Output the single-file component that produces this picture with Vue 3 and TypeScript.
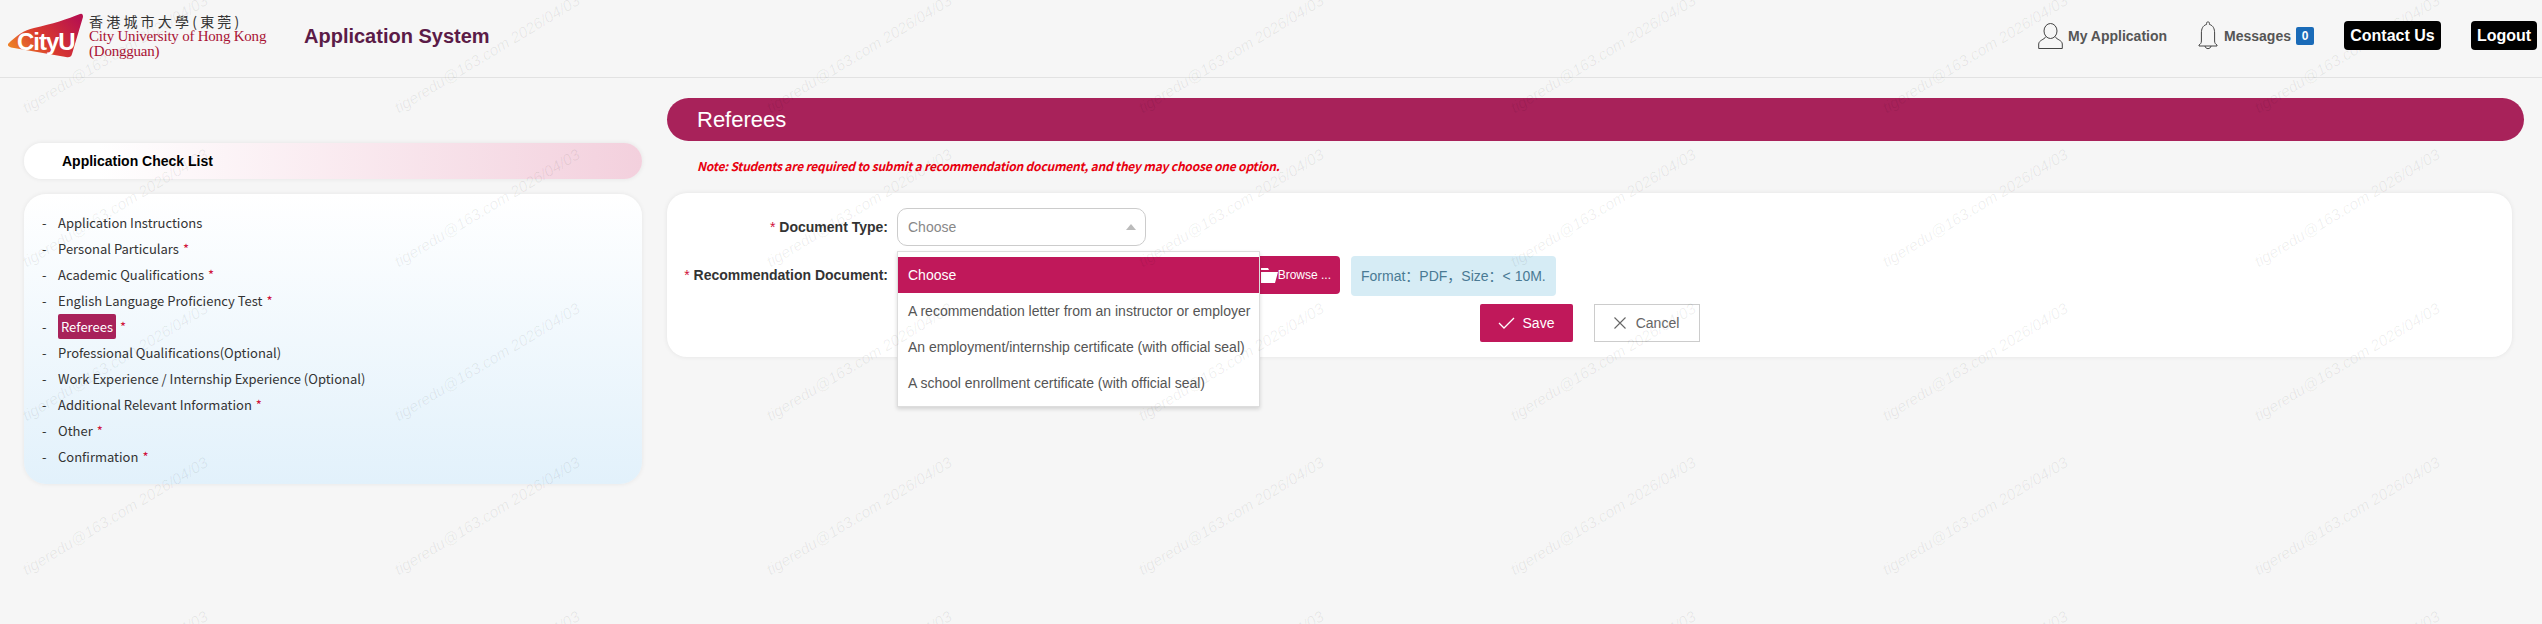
<template>
  <div class="page">
    <header class="header">
      <div class="brand">
        <svg class="logo" width="78" height="48" viewBox="0 0 78 48">
          <defs>
            <linearGradient id="logoGrad" x1="0" y1="0.75" x2="1" y2="0.25">
              <stop offset="0" stop-color="#ee8427" />
              <stop offset="0.45" stop-color="#d8382f" />
              <stop offset="1" stop-color="#b8124e" />
            </linearGradient>
          </defs>
          <path d="M0 31 C8 23 16 17 26 15 C44 11 60 6 72 1 Q75 0 75 4 L64 41 Q63 45 58 44 L6 35 Q-1 34 0 31 Z" fill="url(#logoGrad)" />
          <text x="9" y="37" class="logo-word">CityU</text>
        </svg>
        <div class="logo-names">
          <div class="name-cn">香港城市大學(東莞)</div>
          <div class="name-en">City University of Hong Kong</div>
          <div class="name-en">(Dongguan)</div>
        </div>
        <div class="app-title">Application System</div>
      </div>
      <nav class="top-nav">
        <a class="nav-item nav-app">
          <svg width="25" height="26" viewBox="0 0 25 26" fill="none" stroke="#444" stroke-width="1">
            <ellipse cx="12.5" cy="8" rx="6.5" ry="7.5" />
            <path d="M8 13.5 C6 17 1 17 .7 21 V25.5 H24.3 V21 C24 17 19 17 17 13.5" />
          </svg>
          <span>My Application</span>
        </a>
        <a class="nav-item nav-msg">
          <svg width="20" height="29" viewBox="0 0 20 29" fill="none" stroke="#444" stroke-width="1">
            <path d="M10 .8 C8.8 .8 8.4 2 8.6 3.4 C4.6 4.6 3.4 8 3.4 12 V20 C3.4 22 2.6 23 1 24 V25 H19 V24 C17.4 23 16.6 22 16.6 20 V12 C16.6 8 15.4 4.6 11.4 3.4 C11.6 2 11.2 .8 10 .8 Z" />
            <path d="M7 25 C7.5 28.5 12.5 28.5 13 25" />
          </svg>
          <span>Messages</span>
          <b class="badge">0</b>
        </a>
        <a class="black-btn contact">Contact Us</a>
        <a class="black-btn logout">Logout</a>
      </nav>
    </header>

    <div class="body">
      <aside class="side">
        <div class="check-head">Application Check List</div>
        <ul class="check-list">
          <li v-for="item in checks" :key="item.label">
            <span class="dash">-</span>
            <span :class="{ active: item.active }">{{ item.label }}</span>
            <i v-if="item.required" class="req">*</i>
          </li>
        </ul>
      </aside>

      <main class="main">
        <h1 class="title-bar">Referees</h1>
        <p class="note">Note: Students are required to submit a recommendation document, and they may choose one option.</p>

        <section class="card">
          <div class="row row-type">
            <label class="label"><i class="star">*</i> Document Type:</label>
            <div class="select-wrap">
              <div class="select">
                <span>Choose</span>
                <em class="caret"></em>
              </div>
              <ul class="dropdown">
                <li
                  v-for="(opt, i) in options"
                  :key="opt"
                  :class="{ selected: i === 0 }"
                >{{ opt }}</li>
              </ul>
            </div>
          </div>

          <div class="row row-doc">
            <label class="label"><i class="star">*</i> Recommendation Document:</label>
            <div class="browse">
              <svg width="17" height="15" viewBox="0 0 17 15" fill="#fff">
                <path d="M0 0 H7 L8 2 H0 Z" />
                <path d="M0 4 H17 L14 15 H0 Z" />
              </svg>
              <span>Browse ...</span>
            </div>
            <div class="hint">Format&#xFF1A;PDF&#xFF0C;Size&#xFF1A;&lt; 10M.</div>
          </div>

          <div class="actions">
            <button class="btn save" type="button">
              <svg width="17" height="12" viewBox="0 0 17 12" fill="none" stroke="#fff" stroke-width="1.3">
                <path d="M1 6 L6 11 L16 1" />
              </svg>
              Save
            </button>
            <button class="btn cancel" type="button">
              <svg width="12" height="12" viewBox="0 0 12 12" fill="none" stroke="#666" stroke-width="1.1">
                <path d="M.5 .5 L11.5 11.5 M11.5 .5 L.5 11.5" />
              </svg>
              Cancel
            </button>
          </div>
        </section>
      </main>
    </div>

    <div class="marks">
      <span
        v-for="m in marks"
        :key="m.key"
        class="mark"
        :style="{ left: m.x + 'px', top: m.y + 'px' }"
      >tigeredu@163.com 2026/04/03</span>
    </div>
  </div>
</template>

<script setup lang="ts">
type TCheck = {
  label: string
  required?: boolean
  active?: boolean
}

const checks: Array<TCheck> = [
  { label: 'Application Instructions' },
  { label: 'Personal Particulars', required: true },
  { label: 'Academic Qualifications', required: true },
  { label: 'English Language Proficiency Test', required: true },
  { label: 'Referees', required: true, active: true },
  { label: 'Professional Qualifications(Optional)' },
  { label: 'Work Experience / Internship Experience (Optional)' },
  { label: 'Additional Relevant Information', required: true },
  { label: 'Other', required: true },
  { label: 'Confirmation', required: true },
]

const options: Array<string> = [
  'Choose',
  'A recommendation letter from an instructor or employer',
  'An employment/internship certificate (with official seal)',
  'A school enrollment certificate (with official seal)',
]

// watermark tile: 372 x 154
const marks: Array<{ key: string; x: number; y: number }> = []
for (let row = 0; row < 6; row++) {
  for (let col = 0; col < 7; col++) {
    marks.push({ key: `${row}-${col}`, x: 28 + col * 372, y: -38 + row * 154 })
  }
}
</script>

<style>
html,
body {
  margin: 0;
  background: #f6f6f6;
}
</style>

<style scoped>
.page {
  position: relative;
  width: 2542px;
  height: 624px;
  overflow: hidden;
  background: #f6f6f6;
  font-family: 'Liberation Sans', Arial, sans-serif;
  font-size: 14px;
  color: #333;
}

.header {
  display: flex;
  justify-content: space-between;
  align-items: flex-start;
  height: 77px;
  border-bottom: 1px solid #e2e2e2;
}

.brand {
  display: flex;
  align-items: flex-start;
  padding: 13px 0 0 8px;
}

.logo {
  overflow: visible;
}

.logo-word {
  font-family: 'Liberation Sans', sans-serif;
  font-weight: 700;
  font-size: 24px;
  letter-spacing: -1px;
  fill: #fff;
}

.logo-names {
  margin-left: 3px;
  width: 215px;
}

.name-cn {
  font-family: 'Noto Sans CJK TC', 'Noto Sans CJK SC', sans-serif;
  font-size: 14px;
  line-height: 16px;
  letter-spacing: 3.2px;
  color: #333;
}

.name-en {
  font-family: 'Liberation Serif', serif;
  font-size: 15px;
  line-height: 15px;
  letter-spacing: -0.22px;
  color: #a91234;
  white-space: nowrap;
}

.app-title {
  font-size: 20px;
  font-weight: 700;
  line-height: 24px;
  margin-top: 11px;
  color: #5b1b47;
}

.top-nav {
  display: flex;
  align-items: flex-start;
  padding: 21px 5px 0 0;
}

.nav-item {
  display: flex;
  align-items: center;
  font-size: 14px;
  font-weight: 700;
  color: #555;
  height: 29px;
}

.nav-app {
  gap: 5px;
  margin-right: 31px;
}

.nav-msg {
  gap: 6px;
  margin-right: 30px;
}

.badge {
  display: block;
  width: 18px;
  height: 18px;
  margin-left: -1px;
  border-radius: 2px;
  background: #1a6bb8;
  color: #fff;
  font-size: 12px;
  line-height: 18px;
  text-align: center;
}

.black-btn {
  display: block;
  height: 29px;
  border-radius: 4px;
  background: #000;
  color: #fff;
  font-size: 16px;
  font-weight: 700;
  line-height: 29px;
  text-align: center;
}

.contact {
  width: 97px;
  margin-right: 30px;
}

.logout {
  width: 66px;
}

.body {
  display: flex;
  align-items: flex-start;
  padding: 20px 18px 0 24px;
}

.side {
  flex: 0 0 618px;
  margin-top: 45px;
}

.check-head {
  height: 36px;
  padding-left: 38px;
  border-radius: 18px;
  background: linear-gradient(90deg, #fff 12%, #f3d0dd 100%);
  box-shadow: 0 0 5px rgba(0, 0, 0, 0.08);
  color: #000;
  font-weight: 700;
  line-height: 36px;
}

.check-list {
  list-style: none;
  height: 290px;
  box-sizing: border-box;
  margin: 15px 0 0;
  padding: 15px 0 0 18px;
  border-radius: 22px;
  background: linear-gradient(180deg, #fff 0%, #e2f1fb 100%);
  box-shadow: 0 0 5px rgba(0, 0, 0, 0.07);
  font-family: 'Noto Sans CJK SC', sans-serif;
  font-size: 13px;
  color: #333;
}

.check-list li {
  display: flex;
  align-items: center;
  height: 26px;
}

.dash {
  width: 16px;
}

.active {
  height: 25px;
  padding: 0 3px;
  border-radius: 2px;
  background: #a8225a;
  color: #fff;
  line-height: 25px;
}

.req {
  margin-left: 4px;
  font-style: normal;
  color: #d0103a;
}

.main {
  flex: 1;
  margin-left: 25px;
}

.title-bar {
  height: 43px;
  margin: 0;
  padding-left: 30px;
  border-radius: 22px;
  background: #a8225a;
  color: #fff;
  font-size: 22px;
  font-weight: 400;
  line-height: 43px;
}

.note {
  margin: 17px 0 0 30px;
  font-family: 'Noto Sans CJK SC', sans-serif;
  font-size: 12px;
  font-weight: 700;
  font-style: italic;
  line-height: 16px;
  letter-spacing: -0.2px;
  color: #e8000f;
}

.card {
  width: 1845px;
  height: 164px;
  box-sizing: border-box;
  margin-top: 19px;
  padding-top: 15px;
  border-radius: 20px;
  background: #fff;
  box-shadow: 0 0 5px rgba(0, 0, 0, 0.08);
}

.row {
  display: flex;
  align-items: flex-start;
}

.label {
  flex: 0 0 221px;
  text-align: right;
  font-weight: 700;
  color: #333;
  white-space: nowrap;
}

.row-type .label {
  line-height: 38px;
}

.row-doc {
  margin-top: 10px;
}

.row-doc .label {
  line-height: 38px;
}

.star {
  font-style: normal;
  font-weight: 400;
  color: #d0103a;
}

.select-wrap {
  position: relative;
  margin-left: 9px;
  width: 249px;
}

.select {
  display: flex;
  justify-content: space-between;
  align-items: center;
  height: 38px;
  box-sizing: border-box;
  padding: 0 9px 0 10px;
  border: 1px solid #ccc;
  border-radius: 10px;
  color: #888;
}

.caret {
  width: 0;
  height: 0;
  border: 5px solid transparent;
  border-top: 0;
  border-bottom: 6px solid #bbb;
}

.dropdown {
  position: absolute;
  z-index: 3;
  top: 43px;
  left: 0;
  width: 363px;
  box-sizing: border-box;
  margin: 0;
  padding: 5px 0;
  list-style: none;
  border: 1px solid #ddd;
  background: #fff;
  box-shadow: 0 2px 4px rgba(0, 0, 0, 0.15);
}

.dropdown li {
  height: 36px;
  padding-left: 10px;
  color: #555;
  line-height: 36px;
  white-space: nowrap;
}

.dropdown li.selected {
  background: #c0185a;
  color: #fff;
}

.browse {
  display: flex;
  justify-content: flex-end;
  align-items: center;
  gap: 0;
  width: 443px;
  height: 38px;
  box-sizing: border-box;
  margin-left: 9px;
  padding-right: 9px;
  border-radius: 4px;
  background: #c0185a;
  color: #fff;
  font-size: 12px;
}

.hint {
  width: 205px;
  height: 40px;
  box-sizing: border-box;
  margin-left: 11px;
  padding-left: 10px;
  border-radius: 4px;
  background: #d6ecf5;
  color: #4a7a94;
  font-family: 'Liberation Sans', 'Noto Sans CJK SC', sans-serif;
  line-height: 40px;
  white-space: nowrap;
}

.actions {
  display: flex;
  justify-content: center;
  gap: 21px;
  margin-top: 8px;
}

.btn {
  display: flex;
  justify-content: center;
  align-items: center;
  height: 38px;
  box-sizing: border-box;
  padding: 0;
  font-family: inherit;
  font-size: 14px;
}

.save {
  gap: 8px;
  width: 93px;
  border: 0;
  border-radius: 2px;
  background: #c0185a;
  color: #fff;
}

.cancel {
  gap: 10px;
  width: 106px;
  border: 1px solid #ccc;
  background: #fff;
  color: #666;
}

.marks {
  position: absolute;
  inset: 0;
  z-index: 5;
  pointer-events: none;
}

.mark {
  position: absolute;
  transform-origin: 0 100%;
  transform: translateY(-100%) rotate(-31deg);
  font-size: 15.5px;
  font-style: italic;
  line-height: 16px;
  color: rgba(0, 0, 0, 0.065);
  white-space: nowrap;
}
</style>
